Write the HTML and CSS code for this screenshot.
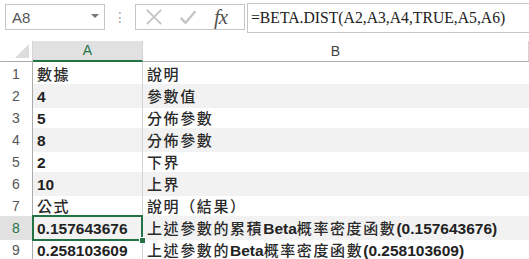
FILE: index.html
```html
<!DOCTYPE html>
<html lang="zh-Hant">
<head>
    <meta charset="UTF-8">
    <title>BETA.DIST</title>
    <link rel="stylesheet" href="styles.css">
</head>
<body>
    <div class="toolbar">
        <div class="namebox">
            <span class="name">A8</span>
            <span class="caret"></span>
        </div>
        <div class="grip">⋮</div>
        <div class="fxbox">
            <svg class="ico" width="20" height="20" viewBox="0 0 20 20">
                <path d="M2 2 L18 18 M18 2 L2 18" stroke="#c4c4c4" stroke-width="2" fill="none"/>
            </svg>
            <svg class="ico" width="22" height="20" viewBox="0 0 22 20">
                <path d="M2 11 L8 17 L20 3" stroke="#c4c4c4" stroke-width="2.8" fill="none"/>
            </svg>
            <span class="fx">fx</span>
        </div>
        <div class="formula">=BETA.DIST(A2,A3,A4,TRUE,A5,A6)</div>
    </div>

    <div class="sheet">
        <div class="head">
            <div class="corner"><span class="tri"></span></div>
            <div class="colhead active">A</div>
            <div class="colhead">B</div>
        </div>

        <div class="row">
            <div class="num">1</div>
            <div class="cell a zh">數據</div>
            <div class="cell zh">說明</div>
        </div>
        <div class="row alt">
            <div class="num">2</div>
            <div class="cell a">4</div>
            <div class="cell zh">參數值</div>
        </div>
        <div class="row">
            <div class="num">3</div>
            <div class="cell a">5</div>
            <div class="cell zh">分佈參數</div>
        </div>
        <div class="row alt">
            <div class="num">4</div>
            <div class="cell a">8</div>
            <div class="cell zh">分佈參數</div>
        </div>
        <div class="row">
            <div class="num">5</div>
            <div class="cell a">2</div>
            <div class="cell zh">下界</div>
        </div>
        <div class="row alt">
            <div class="num">6</div>
            <div class="cell a">10</div>
            <div class="cell zh">上界</div>
        </div>
        <div class="row">
            <div class="num">7</div>
            <div class="cell a zh">公式</div>
            <div class="cell zh">說明（結果）</div>
        </div>
        <div class="row alt">
            <div class="num sel-num">8</div>
            <div class="cell a sel">0.157643676</div>
            <div class="cell"><span class="zh">上述參數的累積</span>Beta<span class="zh">概率密度函數</span>(0.157643676)</div>
        </div>
        <div class="row">
            <div class="num">9</div>
            <div class="cell a">0.258103609</div>
            <div class="cell"><span class="zh">上述參數的</span>Beta<span class="zh">概率密度函數</span>(0.258103609)</div>
        </div>
    </div>
</body>
</html>
```

FILE: styles.css
```css
body {
    margin: 0;
    background: #ffffff;
    font-family: "Liberation Sans", Arial, sans-serif;
    overflow: hidden;
}

/* formula bar */
.toolbar {
    display: flex;
    align-items: flex-start;
    height: 34px;
    padding-top: 3px;
    box-sizing: border-box;
}

.namebox {
    display: flex;
    align-items: center;
    justify-content: space-between;
    width: 100px;
    height: 26px;
    margin: 1px 0 0 5px;
    border: 1px solid #c6c6c6;
    box-sizing: border-box;
    padding: 0 5px 0 6px;
}

.name {
    font-size: 15px;
    color: #555555;
}

.caret {
    width: 0;
    height: 0;
    border-left: 4px solid transparent;
    border-right: 4px solid transparent;
    border-top: 4px solid #777777;
    margin-top: -2px;
}

.grip {
    width: 30px;
    text-align: center;
    font-family: "DejaVu Sans", sans-serif;
    font-size: 14px;
    line-height: 28px;
    color: #a0a0a0;
}

.fxbox {
    display: flex;
    align-items: center;
    gap: 16px;
    width: 110px;
    height: 26px;
    margin-top: 1px;
    border: 1px solid #c6c6c6;
    box-sizing: border-box;
    padding-left: 9px;
}

.ico {
    display: block;
    width: 18px;
    height: 18px;
}

.fx {
    font-family: "Liberation Serif", serif;
    font-style: italic;
    font-size: 21px;
    color: #555555;
    margin-left: 1px;
    letter-spacing: -1px;
}

.formula {
    flex: 1;
    height: 30px;
    margin-left: 2px;
    border: 1px solid #c6c6c6;
    border-right: none;
    box-sizing: border-box;
    padding: 2px 0 0 3px;
    font-family: "Liberation Serif", serif;
    font-size: 15.7px;
    color: #222222;
    line-height: 24px;
}

/* grid */
.sheet {
    margin-top: 7px;
}

.head,
.row {
    display: grid;
    grid-template-columns: 33px 110px 1fr;
}

.head {
    height: 20px;
    border-bottom: 1px solid #ababab;
}

.corner {
    position: relative;
    border-right: 1px solid #d4d4d4;
}

.tri {
    position: absolute;
    right: 3px;
    bottom: 3px;
    width: 0;
    height: 0;
    border-left: 14px solid transparent;
    border-bottom: 14px solid #dcdcdc;
}

.colhead {
    text-align: center;
    font-size: 14px;
    line-height: 20px;
    color: #444444;
    border-right: 1px solid #d4d4d4;
}

.colhead.active {
    background: #e1e1e1;
    color: #217346;
    border-bottom: 2px solid #217346;
    margin-bottom: -1px;
    line-height: 19px;
}

.row {
    height: 22px;
}

.num {
    text-align: center;
    font-size: 14px;
    line-height: 24px;
    color: #555555;
    border-right: 1px solid #ababab;
}

.num.sel-num {
    background: #e1e1e1;
    color: #217346;
}

.cell {
    padding: 3px 0 0 4px;
    font-size: 15.5px;
    font-weight: bold;
    line-height: 20px;
    color: #222222;
    white-space: nowrap;
    overflow: hidden;
}

.cell.a {
    border-right: 1px solid #d4d4d4;
}

.row.alt .cell {
    background: #f2f2f2;
}

.zh {
    font-family: "Liberation Sans", "Noto Sans CJK TC", sans-serif;
    font-size: 15px;
    letter-spacing: 1.6px;
    font-weight: 500;
    color: #2a2a2a;
}

.cell.sel {
    position: relative;
    overflow: visible;
}

.cell.sel::before {
    content: "";
    position: absolute;
    left: -1px;
    top: -1px;
    right: -1px;
    bottom: -1px;
    border: 2px solid #217346;
}

.cell.sel::after {
    content: "";
    position: absolute;
    right: -4px;
    bottom: -4px;
    width: 5px;
    height: 5px;
    background: #217346;
    border: 1px solid #ffffff;
    z-index: 1;
}
```
